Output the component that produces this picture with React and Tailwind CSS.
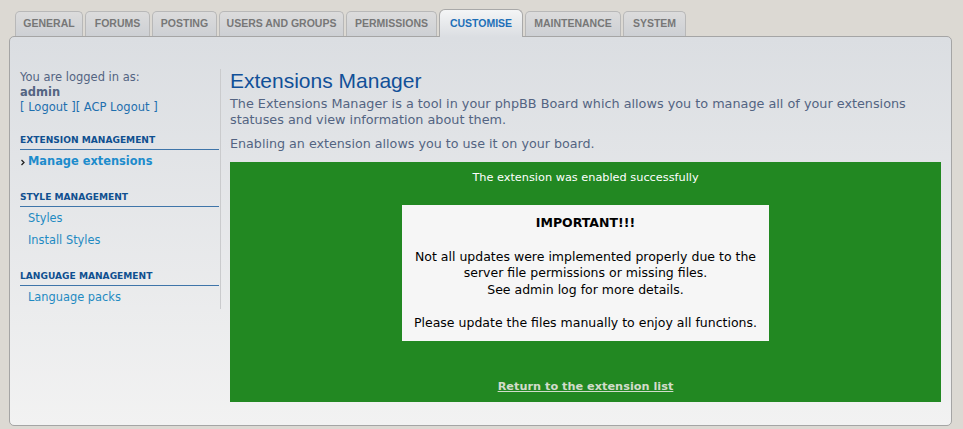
import React from 'react';

const TABS = [
  { label: 'GENERAL', w: 'w-[68px]' },
  { label: 'FORUMS', w: 'w-[65px]' },
  { label: 'POSTING', w: 'w-[65px]' },
  { label: 'USERS AND GROUPS', w: 'w-[125px]' },
  { label: 'PERMISSIONS', w: 'w-[91px]' },
  { label: 'CUSTOMISE', w: 'w-[84px]', active: true },
  { label: 'MAINTENANCE', w: 'w-[96px]' },
  { label: 'SYSTEM', w: 'w-[63px]' },
];

const MENU = [
  { title: 'EXTENSION MANAGEMENT', items: [{ label: 'Manage extensions', active: true }] },
  { title: 'STYLE MANAGEMENT', items: [{ label: 'Styles' }, { label: 'Install Styles' }] },
  { title: 'LANGUAGE MANAGEMENT', items: [{ label: 'Language packs' }] },
];

function Tab({ tab }) {
  if (tab.active) {
    return (
      <div
        className={`${tab.w} relative z-10 -mb-px h-[28px] rounded-t-[6px] border border-b-0 border-[#a9a9a9] bg-gradient-to-b from-[#f4f5f6] to-[#dbdee2] flex items-center justify-center text-[10.5px] font-bold text-[#1d6fb8]`}
      >
        {tab.label}
      </div>
    );
  }
  return (
    <div
      className={`${tab.w} h-[25px] rounded-t-[5px] border border-b-0 border-[#b8b8b8] bg-gradient-to-b from-[#dcdcdc] to-[#cdd0d4] flex items-center justify-center text-[10.5px] font-bold text-[#777777]`}
    >
      {tab.label}
    </div>
  );
}

export default function App() {
  return (
    <div className="h-[429px] w-[963px] overflow-hidden bg-[#dcd9d3] pt-[9px] pl-[9px] font-['DejaVu_Sans',sans-serif]">
      {/* tabs */}
      <div className="flex items-end gap-[2px] pl-[6px] font-['Liberation_Sans',Arial,sans-serif]">
        {TABS.map((t) => (
          <Tab key={t.label} tab={t} />
        ))}
      </div>

      {/* panel */}
      <div className="w-[943px] h-[390px] rounded-[5px] border border-[#a5a5a5] bg-gradient-to-b from-[#dbdee2] to-[#f2f2f2] flex pl-[10px] pr-[10px] pt-[32px]">
        {/* sidebar */}
        <div className="w-[201px] shrink-0 self-start border-r border-[#cacbcd] pr-[1px]">
          <div className="text-[11.5px] leading-[15px] text-[#536482] pt-[1px]">
            <div>You are logged in as:</div>
            <div className="font-bold">admin</div>
            <div className="text-[#1e6fae]">
              <span>[ Logout ]</span>
              <span>[ ACP Logout ]</span>
            </div>
          </div>
          {MENU.map((m, i) => (
            <div key={m.title} className={i === 0 ? 'mt-[19px]' : 'mt-[18px]'}>
              <div className="border-b border-[#3f75a9] pb-[2px] text-[9.1px] font-bold leading-[13px] text-[#105090]">
                {m.title}
              </div>
              <div className="pt-[1px]">
                {m.items.map((it) =>
                  it.active ? (
                    <div key={it.label} className="flex items-center h-[22px] text-[11.4px] font-bold text-[#1d8ccc]">
                      <svg className="w-[8px] h-[7px]" viewBox="0 0 8 7">
                        <polyline points="1.5,1 4,3.5 1.5,6" fill="none" stroke="#222" strokeWidth="1.3" />
                      </svg>
                      <span>{it.label}</span>
                    </div>
                  ) : (
                    <div key={it.label} className="pl-[8px] h-[22px] flex items-center text-[11.4px] text-[#1f8ac2]">
                      {it.label}
                    </div>
                  )
                )}
              </div>
            </div>
          ))}
        </div>

        {/* main */}
        <div className="flex-1 pl-[9px]">
          <h1 className="font-['Liberation_Sans',sans-serif] text-[21px] leading-[24px] text-[#115098]">
            Extensions Manager
          </h1>
          <p className="mt-[3px] text-[12.8px] leading-[16px] text-[#536482]">
            The Extensions Manager is a tool in your phpBB Board which allows you to manage all of your extensions statuses and view information about them.
          </p>
          <p className="mt-[8px] text-[12.7px] leading-[16px] text-[#536482]">
            Enabling an extension allows you to use it on your board.
          </p>
          <div className="mt-[10px] h-[240px] bg-[#228822] flex flex-col items-center pt-[9px]">
            <div className="text-[11.3px] leading-[14px] text-white">The extension was enabled successfully</div>
            <div className="mt-[20px] w-[367px] h-[136px] bg-[#f6f6f6] text-center text-[12.5px] leading-[16.5px] text-black pt-[10px]">
              <div className="font-bold">IMPORTANT!!!</div>
              <div className="mt-[17px]">
                Not all updates were implemented properly due to the
                <br />
                server file permissions or missing files.
                <br />
                See admin log for more details.
              </div>
              <div className="mt-[17px]">Please update the files manually to enjoy all functions.</div>
            </div>
            <a className="mt-[38px] text-[11.3px] font-bold underline text-[#d3dccb]">Return to the extension list</a>
          </div>
        </div>
      </div>
    </div>
  );
}
